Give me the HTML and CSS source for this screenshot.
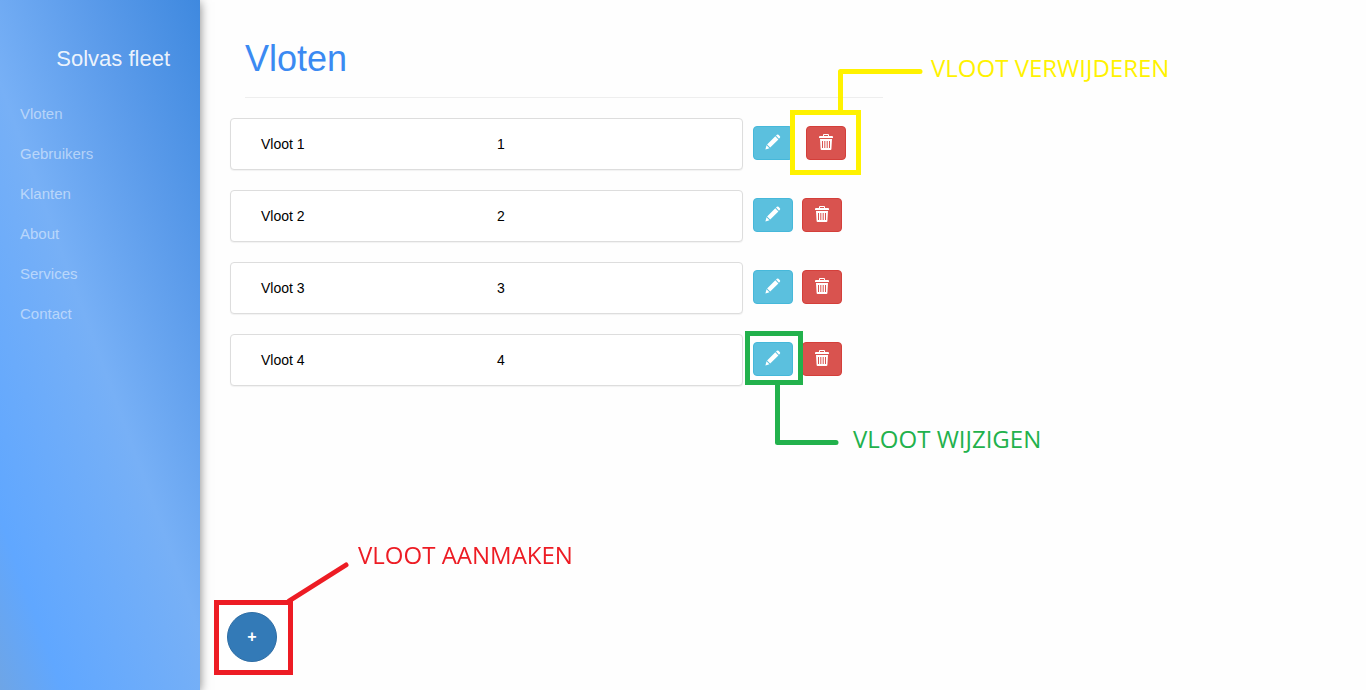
FILE: index.html
```html
<!DOCTYPE html>
<html lang="nl">
<head>
<meta charset="utf-8">
<meta name="viewport" content="width=device-width, initial-scale=1">
<title>Solvas fleet - Vloten</title>
<link rel="stylesheet" href="styles.css">
</head>
<body>
<svg class="sprite" aria-hidden="true">
  <symbol id="pencil" viewBox="0 0 16 16">
    <path d="M11 1.6 11.9.8q.8-.7 1.6 0l1.4 1.4q.7.8 0 1.6l-.9.9zM10.3 2.3l3.1 3.1-8.2 8.2-3.1-3.1zM1.5 11.2l3 3L.4 15.4z"/>
  </symbol>
  <symbol id="trash" viewBox="0 0 16 16">
    <path fill-rule="evenodd" d="M5 2V1q0-1 1-1h4q1 0 1 1v1h3q1 0 1 1v1H1V3q0-1 1-1zM6 2h4V1H6zM2 5h12l-.6 10q0 1-1 1H3.600q-1 0-1-1zM4 7v7h1V7zM6.300 7v7h1V7zM8.700 7v7h1V7zM11 7v7h1V7z"/>
  </symbol>
</svg>
<div class="layout">
  <aside class="sidebar">
    <a class="brand" href="#">Solvas fleet</a>
    <nav class="menu">
      <a href="#">Vloten</a>
      <a href="#">Gebruikers</a>
      <a href="#">Klanten</a>
      <a href="#">About</a>
      <a href="#">Services</a>
      <a href="#">Contact</a>
    </nav>
  </aside>
  <main class="content">
    <header class="page-header"><h1>Vloten</h1></header>
    <ul class="fleets">
      <li class="fleet">
        <div class="card"><span>Vloot 1</span><span>1</span></div>
        <div class="actions">
          <button class="btn edit" type="button" aria-label="Vloot 1 wijzigen"><svg><use href="#pencil"/></svg></button>
          <div class="target target-delete">
            <div class="frame"></div>
            <button class="btn delete" type="button" aria-label="Vloot 1 verwijderen"><svg><use href="#trash"/></svg></button>
            <svg class="line" width="86" height="44" aria-hidden="true"><path d="M2.500 44V4.500H82"/></svg>
            <span class="note">VLOOT VERWIJDEREN</span>
          </div>
        </div>
      </li>
      <li class="fleet">
        <div class="card"><span>Vloot 2</span><span>2</span></div>
        <div class="actions">
          <button class="btn edit" type="button" aria-label="Vloot 2 wijzigen"><svg><use href="#pencil"/></svg></button>
          <button class="btn delete" type="button" aria-label="Vloot 2 verwijderen"><svg><use href="#trash"/></svg></button>
        </div>
      </li>
      <li class="fleet">
        <div class="card"><span>Vloot 3</span><span>3</span></div>
        <div class="actions">
          <button class="btn edit" type="button" aria-label="Vloot 3 wijzigen"><svg><use href="#pencil"/></svg></button>
          <button class="btn delete" type="button" aria-label="Vloot 3 verwijderen"><svg><use href="#trash"/></svg></button>
        </div>
      </li>
      <li class="fleet">
        <div class="card"><span>Vloot 4</span><span>4</span></div>
        <div class="actions">
          <div class="target target-edit">
            <div class="frame"></div>
            <button class="btn edit" type="button" aria-label="Vloot 4 wijzigen"><svg><use href="#pencil"/></svg></button>
            <svg class="line" width="66" height="62" aria-hidden="true"><path d="M3.500 0V58.500H62"/></svg>
            <span class="note">VLOOT WIJZIGEN</span>
          </div>
          <button class="btn delete" type="button" aria-label="Vloot 4 verwijderen"><svg><use href="#trash"/></svg></button>
        </div>
      </li>
    </ul>
  </main>
</div>
<div class="target target-add">
  <div class="frame"></div>
  <button class="add" type="button" aria-label="Vloot aanmaken">+</button>
  <svg class="line" width="64" height="42" aria-hidden="true"><path d="M3 39 60 3"/></svg>
  <span class="note">VLOOT AANMAKEN</span>
</div>
</body>
</html>
```

FILE: styles.css
```css
* { box-sizing: border-box; }

body {
  margin: 0;
  background: #fefefe;
  color: #000;
  font: 14px/20px "Liberation Sans", Arial, sans-serif;
}

.sprite { display: none; }

.layout {
  display: flex;
  min-height: 100vh;
}

/* Sidebar */
.sidebar {
  flex: 0 0 200px;
  padding: 39px 0;
  background: linear-gradient(70deg, #6ea5e6 0%, #60a7ff 14%, #77b0f6 49%, #5b9bea 75%, #3f89df 100%);
  box-shadow: 0 2px 10px rgba(0, 0, 0, .5);
}

.brand {
  display: block;
  padding: 0 30px;
  color: rgba(255, 255, 255, .9);
  font-size: 22px;
  line-height: 40px;
  text-align: right;
  text-decoration: none;
}

.menu {
  display: flex;
  flex-direction: column;
  margin-top: 15px;
}

.menu a {
  padding: 0 20px;
  color: rgba(255, 255, 255, .5);
  font-size: 15px;
  line-height: 40px;
  text-decoration: none;
}

/* Fleet list */
.content {
  width: 50%;
  padding: 39px 15px 0;
  margin-left: 15px;
}

.page-header {
  margin: 0 0 20px 15px;
  padding-bottom: 18px;
  border-bottom: 1px solid #eee;
}

h1 {
  margin: 0;
  color: #3b8af2;
  font-size: 36px;
  font-weight: 400;
  line-height: 40px;
}

.fleets {
  display: grid;
  gap: 20px;
  margin: 0;
  padding: 0;
  list-style: none;
}

.fleet {
  display: grid;
  grid-template-columns: minmax(0, 1fr) 130px;
  gap: 10px;
}

.card {
  display: grid;
  grid-template-columns: 1fr 1fr;
  padding: 15px 9px 15px 30px;
  border: 1px solid #ddd;
  border-radius: 4px;
  background: #fff;
  box-shadow: 0 1px 1px rgba(0, 0, 0, .05);
}

.actions {
  display: flex;
  gap: 9px;
  padding-top: 8px;
}

.btn {
  display: block;
  width: 40px;
  height: 34px;
  padding: 0 0 3px;
  border: 1px solid;
  border-radius: 4px;
  color: #fff;
}

.btn svg {
  display: block;
  width: 16px;
  height: 16px;
  margin: 0 auto;
  fill: currentColor;
}

.edit { background: #5bc0de; border-color: #46b8da; }
.delete { background: #d9534f; border-color: #d43f3a; }

/* Callouts */
.target {
  position: relative;
  height: 34px;
}

.target .frame,
.target .line,
.target .note { position: absolute; z-index: 2; }

.target button { position: relative; z-index: 3; }

.frame {
  border: 5px solid;
  background: #fff;
}

.line {
  fill: none;
  stroke: currentColor;
  stroke-width: 5px;
  stroke-linecap: round;
}

.line path { stroke-linejoin: round; }

.note {
  font: 24px/30px "Open Sans", "Noto Sans", sans-serif;
  white-space: nowrap;
}

.target-delete { margin-left: 4px; color: #fff200; }
.target-delete .frame { inset: -16px -15px -15px -16px; }
.target-delete .line { left: 32px; top: -59px; }
.target-delete .note { left: 125px; top: -73px; }

.target-edit { color: #22b14c; }
.target-edit .frame { inset: -11px -10px -9px -8px; }
.target-edit .line { left: 21px; top: 42px; }
.target-edit .note { left: 100px; top: 82px; }

.target-add {
  position: fixed;
  bottom: 28px;
  left: 227px;
  height: 50px;
  color: #ed1c24;
}
.target-add .frame { inset: -12px -16px -13px -13px; }
.target-add .line { left: 59px; top: -50px; }
.target-add .note { left: 131px; top: -72px; }

.add {
  display: block;
  width: 50px;
  height: 50px;
  padding: 0;
  border: 1px solid #2e6da4;
  border-radius: 50%;
  background: #337ab7;
  color: #fff;
  font: bold 16px/20px "Liberation Sans", Arial, sans-serif;
}
```
